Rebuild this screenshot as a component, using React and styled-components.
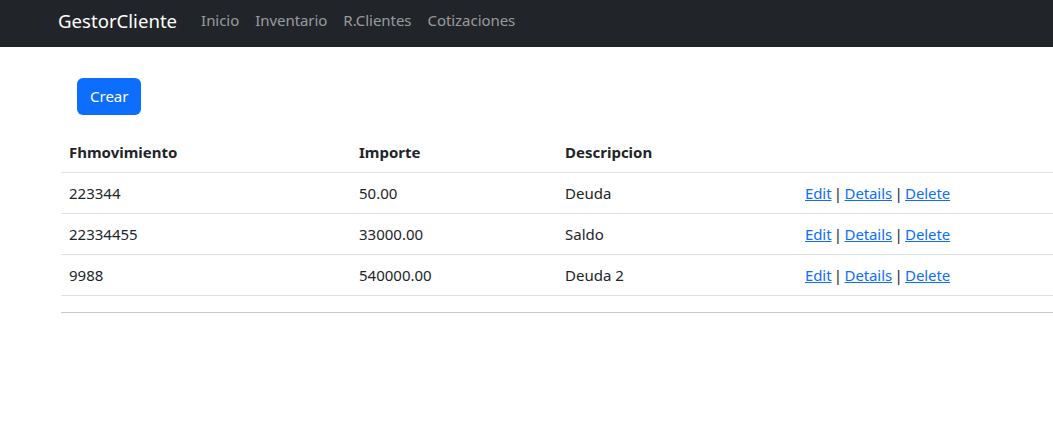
import React from "react";
import styled, { createGlobalStyle } from "styled-components";

const Global = createGlobalStyle`
  html, body { margin: 0; padding: 0; background: #fff; overflow: hidden; }
  body { font-family: "Noto Sans", "Open Sans", sans-serif; font-size: 16px; line-height: 1.5; color: #212529; }
`;

const Navbar = styled.nav`
  background: #212529;
  height: 47px;
  box-sizing: border-box;
  padding: 0 0 6px 58px;
  display: flex;
  align-items: center;
`;
const Brand = styled.a`
  color: #fff;
  font-size: 18.6px;
  margin-right: 16px;
  text-decoration: none;
`;
const NavLink = styled.a`
  color: rgba(255, 255, 255, 0.55);
  font-size: 15px;
  letter-spacing: -0.05px;
  padding: 0 8px;
  text-decoration: none;
`;

const Main = styled.main`
  padding: 31px 0 0 61px;
`;
const ButtonRow = styled.div`
  padding-left: 16px;
  margin-bottom: 17px;
`;
const Button = styled.button`
  background: #0d6efd;
  color: #fff;
  border: none;
  border-radius: 6px;
  font: inherit;
  font-size: 15px;
  height: 37px;
  padding: 0 13px;
`;
const Table = styled.table`
  border-collapse: collapse;
  width: 1010px;
  font-size: 15px;
`;
const Th = styled.th`
  text-align: left;
  font-weight: 700;
  padding: 8px;
  height: 40px;
  box-sizing: border-box;
  border-bottom: 1px solid #dee2e6;
  width: ${(p) => p.w || "auto"};
`;
const Td = styled.td`
  padding: 9px 8px 7px;
  height: 41px;
  box-sizing: border-box;
  border-bottom: 1px solid #dee2e6;
  word-spacing: ${(p) => (p.tight ? "-1.5px" : "normal")};
`;
const Link = styled.a`
  color: #0d6efd;
  text-decoration: underline;
  letter-spacing: -0.1px;
`;
const Rule = styled.hr`
  margin: 16px 0 0 0;
  width: 1010px;
  border: none;
  border-top: 1px solid #c9c9c9;
`;

const rows = [
  ["223344", "50.00", "Deuda"],
  ["22334455", "33000.00", "Saldo"],
  ["9988", "540000.00", "Deuda 2"],
];

export default function App() {
  return (
    <>
      <Global />
      <Navbar>
        <Brand>GestorCliente</Brand>
        <NavLink>Inicio</NavLink>
        <NavLink>Inventario</NavLink>
        <NavLink>R.Clientes</NavLink>
        <NavLink>Cotizaciones</NavLink>
      </Navbar>
      <Main>
        <ButtonRow>
          <Button>Crear</Button>
        </ButtonRow>
        <Table>
          <thead>
            <tr>
              <Th w="290px">Fhmovimiento</Th>
              <Th w="206px">Importe</Th>
              <Th w="240px">Descripcion</Th>
              <Th></Th>
            </tr>
          </thead>
          <tbody>
            {rows.map((r) => (
              <tr key={r[0]}>
                <Td>{r[0]}</Td>
                <Td>{r[1]}</Td>
                <Td>{r[2]}</Td>
                <Td tight>
                  <Link>Edit</Link> | <Link>Details</Link> | <Link>Delete</Link>
                </Td>
              </tr>
            ))}
          </tbody>
        </Table>
        <Rule />
      </Main>
    </>
  );
}
